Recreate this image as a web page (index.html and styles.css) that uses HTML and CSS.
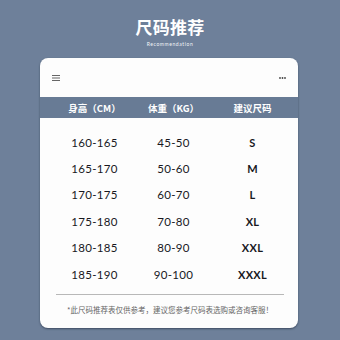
FILE: index.html
```html
<!DOCTYPE html>
<html lang="zh">
<head>
<meta charset="utf-8">
<link rel="stylesheet" href="styles.css">
</head>
<body>
<div class="page">
  <div class="heading">
    <div class="title">尺码推荐</div>
    <div class="subtitle">Recommendation</div>
  </div>
  <div class="card">
    <div class="topbar">
      <svg class="menu" width="8" height="6" viewBox="0 0 8 6"><rect x="0" y="0" width="8" height="1" fill="#666"/><rect x="0" y="2.5" width="8" height="1" fill="#666"/><rect x="0" y="5" width="8" height="1" fill="#666"/></svg>
      <svg class="dots" width="7" height="2" viewBox="0 0 7 2"><circle cx="1" cy="1" r="0.9" fill="#444"/><circle cx="3.5" cy="1" r="0.9" fill="#444"/><circle cx="6" cy="1" r="0.9" fill="#444"/></svg>
    </div>
    <div class="thead">
      <div>身高（CM）</div>
      <div>体重（KG）</div>
      <div>建议尺码</div>
    </div>
    <div class="tbody">
      <div class="row"><div>160-165</div><div>45-50</div><div>S</div></div>
      <div class="row"><div>165-170</div><div>50-60</div><div>M</div></div>
      <div class="row"><div>170-175</div><div>60-70</div><div>L</div></div>
      <div class="row"><div>175-180</div><div>70-80</div><div>XL</div></div>
      <div class="row"><div>180-185</div><div>80-90</div><div>XXL</div></div>
      <div class="row"><div>185-190</div><div>90-100</div><div>XXXL</div></div>
    </div>
    <div class="divider"></div>
    <div class="note">*此尺码推荐表仅供参考，建议您参考尺码表选购或咨询客服！</div>
  </div>
</div>
</body>
</html>
```
FILE: styles.css
```css
html, body {
  margin: 0;
  padding: 0;
}
body {
  width: 340px;
  height: 340px;
  overflow: hidden;
  background: #6e809a;
  font-family: "Noto Sans CJK SC", "Noto Sans", sans-serif;
}
.page {
  display: flex;
  flex-direction: column;
  align-items: center;
  padding-top: 15px;
}
.heading {
  display: flex;
  flex-direction: column;
  align-items: center;
  height: 43px;
}
.title {
  color: #fff;
  font-size: 17px;
  font-weight: 700;
  line-height: 24px;
  letter-spacing: 0.3px;
}
.subtitle {
  color: #f2f4f8;
  font-family: "Lato", sans-serif;
  font-size: 5px;
  line-height: 8px;
  letter-spacing: 0.6px;
  margin-top: 1px;
}
.card {
  width: 258px;
  height: 270px;
  margin-left: -2px;
  background: #fdfdfd;
  border-radius: 8px;
  overflow: hidden;
  box-shadow: 0 1px 2px rgba(30, 40, 60, 0.6);
  display: flex;
  flex-direction: column;
}
.topbar {
  height: 39px;
  display: flex;
  align-items: center;
  justify-content: space-between;
  padding: 0 12px 0 12px;
  box-sizing: border-box;
}
.menu, .dots {
  display: block;
}
.thead {
  height: 21px;
  background: #687b95;
  display: grid;
  grid-template-columns: 79px 79px 79px;
  padding-left: 15px;
  align-items: center;
  color: #fff;
  font-size: 9.5px;
  font-weight: 700;
}
.thead div, .row div {
  text-align: center;
}
.tbody {
  padding-top: 11px;
}
.row {
  height: 26.4px;
  display: grid;
  grid-template-columns: 79px 79px 79px;
  padding-left: 15px;
  align-items: center;
  font-family: "Lato", sans-serif;
  font-size: 11.5px;
  color: #18181d;
  letter-spacing: 0.3px;
}
.row div:last-child {
  font-weight: 700;
  font-size: 11px;
}
.divider {
  height: 1px;
  background: #b8b8b8;
  margin: 7px 14px 0 16px;
}
.note {
  text-align: center;
  font-size: 7.5px;
  color: #666;
  margin-top: 9px;
  padding-left: 2px;
}
```
